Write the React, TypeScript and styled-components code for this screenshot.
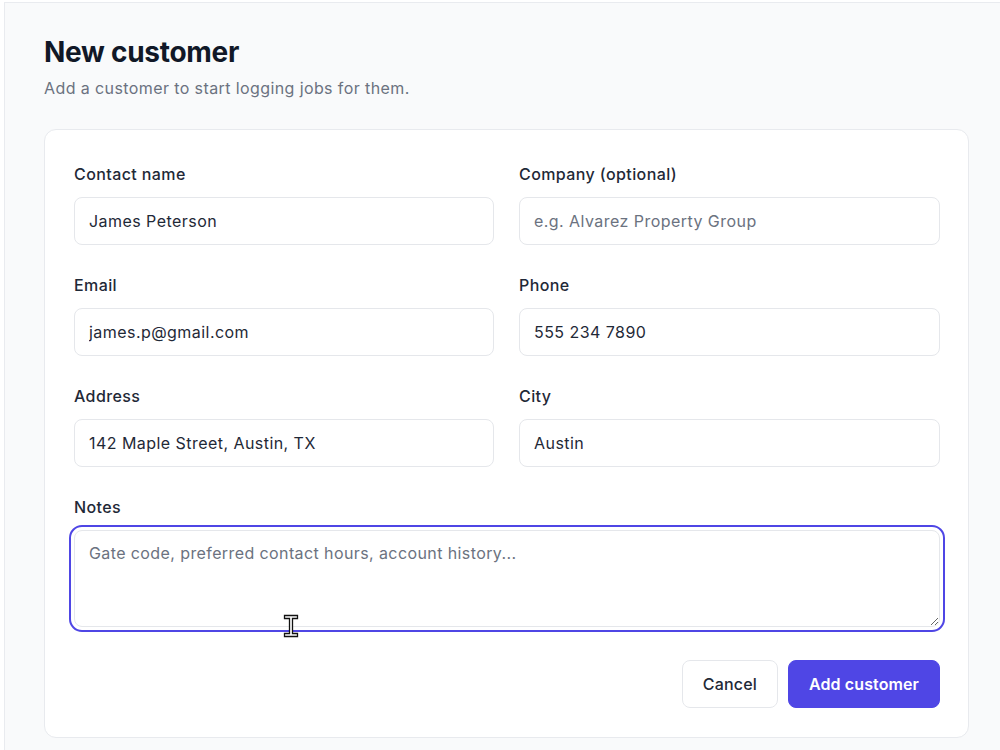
import React from 'react';
import styled, { createGlobalStyle } from 'styled-components';

const GlobalStyle = createGlobalStyle`
  html, body {
    margin: 0;
    padding: 0;
    background: #ffffff;
    font-family: Inter, "Noto Sans", "Liberation Sans", sans-serif;
  }
  * {
    box-sizing: border-box;
  }
`;

const Main = styled.main`
  position: relative;
  margin: 2px 0 0 4px;
  min-height: 748px;
  padding: 31px 31px 12px 39px;
  background: #f9fafb;
  border-top: 1px solid #e9ebef;
  border-left: 1px solid #e9ebef;
`;

const Title = styled.h1`
  margin: 0;
  font-size: 28px;
  line-height: 36px;
  font-weight: 700;
  letter-spacing: -0.01em;
  color: #111827;
`;

const Subtitle = styled.p`
  margin: 6px 0 0;
  font-size: 16px;
  line-height: 24px;
  letter-spacing: 0.4px;
  color: #6b7280;
`;

const Card = styled.form`
  margin-top: 29px;
  padding: 32px 28px 29px 29px;
  background: #ffffff;
  border: 1px solid #e8eaee;
  border-radius: 12px;
`;

const Grid = styled.div`
  display: grid;
  grid-template-columns: 420px 421px;
  column-gap: 25px;
  row-gap: 28px;
`;

const Field = styled.label<{ $wide?: boolean }>`
  display: flex;
  flex-direction: column;
  gap: 11px;
  grid-column: ${(p) => (p.$wide ? '1 / -1' : 'auto')};
`;

const Label = styled.span`
  font-size: 16px;
  line-height: 24px;
  font-weight: 500;
  letter-spacing: 0.4px;
  color: #1f2937;
`;

const Input = styled.input`
  height: 48px;
  padding: 0 14px;
  font-family: inherit;
  font-size: 16px;
  letter-spacing: 0.45px;
  color: #1f2937;
  background: #ffffff;
  border: 1px solid #e5e7eb;
  border-radius: 8px;
  outline: none;

  &::placeholder {
    color: #6b7280;
  }
`;

const TextArea = styled.textarea<{ $active?: boolean }>`
  height: 97px;
  padding: 10px 14px;
  font-family: inherit;
  font-size: 16px;
  line-height: 24px;
  letter-spacing: 0.4px;
  color: #1f2937;
  caret-color: #1f2937;
  background: #ffffff;
  border: 1px solid #e5e7eb;
  border-radius: 8px;
  resize: vertical;
  outline: ${(p) => (p.$active ? '2px solid #4f46e5' : 'none')};
  outline-offset: 3px;

  &::placeholder {
    color: #6b7280;
  }
`;

const Actions = styled.div`
  display: flex;
  justify-content: flex-end;
  gap: 10px;
  margin-top: 33px;
`;

const Button = styled.button<{ $primary?: boolean }>`
  height: 48px;
  padding: 0 20px;
  font-family: inherit;
  font-size: 16px;
  font-weight: ${(p) => (p.$primary ? 600 : 500)};
  letter-spacing: ${(p) => (p.$primary ? '0.1px' : '0.2px')};
  color: ${(p) => (p.$primary ? '#ffffff' : '#1f2937')};
  background: ${(p) => (p.$primary ? '#4f46e5' : '#ffffff')};
  border: 1px solid ${(p) => (p.$primary ? '#4f46e5' : '#e5e7eb')};
  border-radius: 8px;
  cursor: pointer;
`;

const Pointer = styled.svg`
  position: absolute;
  left: 278px;
  top: 609px;
  pointer-events: none;
`;

const fields = [
  { label: 'Contact name', value: 'James Peterson', placeholder: '' },
  { label: 'Company (optional)', value: '', placeholder: 'e.g. Alvarez Property Group' },
  { label: 'Email', value: 'james.p@gmail.com', placeholder: '' },
  { label: 'Phone', value: '555 234 7890', placeholder: '' },
  { label: 'Address', value: '142 Maple Street, Austin, TX', placeholder: '' },
  { label: 'City', value: 'Austin', placeholder: '' },
];

const App = (): JSX.Element => (
  <>
    <GlobalStyle />
    <Main>
      <Title>New customer</Title>
      <Subtitle>Add a customer to start logging jobs for them.</Subtitle>
      <Card onSubmit={(e) => e.preventDefault()}>
        <Grid>
          {fields.map((f) => (
            <Field key={f.label}>
              <Label>{f.label}</Label>
              <Input defaultValue={f.value} placeholder={f.placeholder} />
            </Field>
          ))}
          <Field $wide>
            <Label>Notes</Label>
            <TextArea
              $active
              autoFocus
              placeholder="Gate code, preferred contact hours, account history..."
            />
          </Field>
        </Grid>
        <Actions>
          <Button type="button">Cancel</Button>
          <Button type="submit" $primary>Add customer</Button>
        </Actions>
      </Card>
      <Pointer width="16" height="28" viewBox="0 0 16 28">
        <path
          d="M1.5 3.5h13v3h-5v15h5v3h-13v-3h5v-15h-5z"
          fill="#ffffff"
          stroke="#111111"
          strokeWidth="1.3"
          strokeLinejoin="miter"
        />
      </Pointer>
    </Main>
  </>
);

export default App;
